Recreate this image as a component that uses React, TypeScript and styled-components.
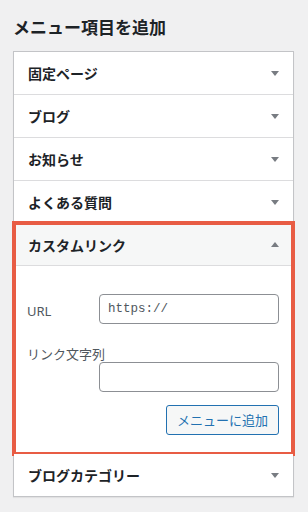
import React from "react";
import styled, { createGlobalStyle } from "styled-components";

const GlobalStyle = createGlobalStyle`
  html, body {
    margin: 0;
    padding: 0;
    background: #f0f0f1;
  }
  body {
    font-family: "Noto Sans", "Noto Sans CJK JP", sans-serif;
    color: #1d2327;
  }
  * { box-sizing: border-box; }
`;

const Page = styled.div`
  width: 308px;
  height: 512px;
  padding: 14px 14px 0 13px;
  overflow: hidden;
`;

const Title = styled.h2`
  margin: 0 0 12px;
  font-family: "Noto Sans CJK JP", sans-serif;
  font-size: 17px;
  line-height: 25px;
  font-weight: 700;
  color: #1d2327;
`;

const Panel = styled.div`
  width: 281px;
  background: #fff;
  border: 1px solid #c3c4c7;
  box-shadow: 0 1px 1px rgba(0, 0, 0, 0.06);
  display: flex;
  flex-direction: column;
`;

const Section = styled.div<{ $highlight?: boolean }>`
  position: relative;
  border-bottom: 1px solid #dcdcde;
  &:last-child {
    border-bottom: none;
  }
  ${(p) =>
    p.$highlight &&
    `
    &::after {
      content: "";
      position: absolute;
      top: -3px;
      bottom: -3px;
      left: -2px;
      right: -2px;
      border: 4px solid #e85c44;
      pointer-events: none;
    }
  `}
`;

const Header = styled.div<{ $open?: boolean }>`
  height: 42px;
  display: flex;
  align-items: center;
  justify-content: space-between;
  padding: 0 14px;
  background: ${(p) => (p.$open ? "#f6f7f7" : "#fff")};
  border-bottom: ${(p) => (p.$open ? "1px solid #dcdcde" : "none")};
  font-family: "Noto Sans CJK JP", sans-serif;
  font-size: 14px;
  font-weight: 700;
  color: #1d2327;
`;

const Arrow = styled.span<{ $up?: boolean }>`
  width: 0;
  height: 0;
  border-left: 4px solid transparent;
  border-right: 4px solid transparent;
  ${(p) =>
    p.$up
      ? "border-bottom: 5px solid #787c82;"
      : "border-top: 5px solid #787c82;"}
`;

const Content = styled.div`
  padding: 28px 14px 18px 13px;
  display: flex;
  flex-direction: column;
  background: #fff;
`;

const InlineField = styled.div`
  display: grid;
  grid-template-columns: 72px 180px;
  align-items: center;
`;

const StackField = styled.div`
  display: flex;
  flex-direction: column;
  margin-top: 22px;
`;

const Label = styled.label<{ $nudge?: boolean }>`
  font-family: "Noto Sans", "Noto Sans CJK JP", sans-serif;
  font-size: 13px;
  line-height: 16px;
  color: #50575e;
  padding-top: ${(p) => (p.$nudge ? "3px" : "0")};
`;

const Input = styled.input<{ $indent?: boolean }>`
  width: 180px;
  height: 30px;
  margin-left: ${(p) => (p.$indent ? "72px" : "0")};
  border: 1px solid #8c8f94;
  border-radius: 4px;
  padding: 0 8px;
  background: #fff;
  font-family: "Liberation Mono", "DejaVu Sans Mono", monospace;
  font-size: 12.5px;
  color: #50575e;
  outline: none;
`;

const Actions = styled.div`
  display: flex;
  justify-content: flex-end;
  margin-top: 13px;
`;

const Button = styled.button`
  height: 30px;
  padding: 0 10px;
  border: 1px solid #2271b1;
  border-radius: 3px;
  background: #f6f7f7;
  color: #2271b1;
  font-family: "Noto Sans CJK JP", sans-serif;
  font-size: 13px;
  line-height: 28px;
  cursor: pointer;
`;

const closedItems = ["固定ページ", "ブログ", "お知らせ", "よくある質問"];

export default function App() {
  return (
    <>
      <GlobalStyle />
      <Page>
        <Title>メニュー項目を追加</Title>
        <Panel>
          {closedItems.map((t) => (
            <Section key={t}>
              <Header>
                <span>{t}</span>
                <Arrow />
              </Header>
            </Section>
          ))}
          <Section $highlight>
            <Header $open>
              <span>カスタムリンク</span>
              <Arrow $up />
            </Header>
            <Content>
              <InlineField>
                <Label $nudge>URL</Label>
                <Input defaultValue="https://" />
              </InlineField>
              <StackField>
                <Label>リンク文字列</Label>
                <Input $indent />
              </StackField>
              <Actions>
                <Button>メニューに追加</Button>
              </Actions>
            </Content>
          </Section>
          <Section>
            <Header>
              <span>ブログカテゴリー</span>
              <Arrow />
            </Header>
          </Section>
        </Panel>
      </Page>
    </>
  );
}
